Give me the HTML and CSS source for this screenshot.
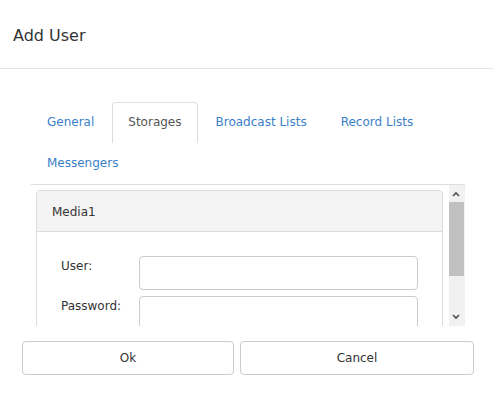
FILE: index.html
```html
<!DOCTYPE html>
<html lang="en">
<head>
<meta charset="utf-8">
<title>Add User</title>
<link rel="stylesheet" href="styles.css">
</head>
<body>
<div class="dialog">
  <div class="header"><h1 class="title">Add User</h1></div>
  <div class="body">
    <ul class="tabs">
      <li class="tab"><a class="tab-link">General</a></li>
      <li class="tab active"><a class="tab-link">Storages</a></li>
      <li class="tab"><a class="tab-link">Broadcast Lists</a></li>
      <li class="tab"><a class="tab-link">Record Lists</a></li>
      <li class="tab"><a class="tab-link">Messengers</a></li>
    </ul>
    <div class="pane">
      <div class="pane-content">
        <div class="panel">
          <div class="panel-heading">Media1</div>
          <div class="panel-body">
            <div class="form-row"><label class="form-label">User:</label><input class="form-input" type="text"></div>
            <div class="form-row"><label class="form-label">Password:</label><input class="form-input" type="password"></div>
          </div>
        </div>
      </div>
      <div class="scrollbar">
        <div class="sb-btn sb-up"><svg width="15" height="17" viewBox="0 0 15 17"><polyline points="4,11 7,8 10,11" fill="none" stroke="#505050" stroke-width="1.6"/></svg></div>
        <div class="sb-track"><div class="sb-thumb"></div></div>
        <div class="sb-btn sb-down"><svg width="15" height="17" viewBox="0 0 15 17"><polyline points="4,6 7,9 10,6" fill="none" stroke="#505050" stroke-width="1.6"/></svg></div>
      </div>
    </div>
  </div>
  <div class="footer">
    <button class="btn btn-ok" type="button">Ok</button>
    <button class="btn btn-cancel" type="button">Cancel</button>
  </div>
</div>
</body>
</html>
```

FILE: styles.css
```css
html, body {
  margin: 0;
  padding: 0;
  background: #ffffff;
}
body {
  font-family: "DejaVu Sans", Verdana, sans-serif;
  font-size: 12px;
  color: #333333;
}
.dialog {
  width: 493px;
}
.header {
  height: 68px;
  border-bottom: 1px solid #e5e5e5;
  padding: 0 13px;
}
.title {
  margin: 0;
  padding-top: 25px;
  font-size: 16px;
  line-height: 22px;
  font-weight: normal;
  color: #333333;
}
.body {
  margin: 33px 28px 0 31px;
}
.tabs {
  list-style: none;
  margin: 0;
  padding: 0;
  display: flex;
  flex-wrap: wrap;
  border-bottom: 1px solid #dddddd;
}
.tab {
  margin-right: 2px;
  height: 41px;
  box-sizing: border-box;
  border: 1px solid transparent;
  border-bottom: 0;
  border-radius: 4px 4px 0 0;
}
.tab.active {
  border-color: #dddddd;
}
.tab-link {
  display: block;
  padding: 10px 15px 9px;
  line-height: 19px;
  color: #3a7fc9;
  cursor: pointer;
}
.tab.active .tab-link {
  color: #555555;
}
.pane {
  display: flex;
  height: 141px;
}
.pane-content {
  flex: 1 1 auto;
  overflow: hidden;
  padding: 5px 6px 0 5px;
}
.panel {
  border: 1px solid #dddddd;
  border-radius: 4px;
}
.panel-heading {
  background: #f4f4f4;
  border-bottom: 1px solid #dddddd;
  border-radius: 3px 3px 0 0;
  padding: 11px 15px 9px;
  line-height: 20px;
  color: #333333;
}
.panel-body {
  padding: 24px 24px;
  display: flex;
  flex-direction: column;
  gap: 6px;
}
.form-row {
  display: flex;
  align-items: flex-start;
}
.form-label {
  flex: 0 0 78px;
  padding-top: 2px;
  line-height: 17px;
  color: #333333;
}
.form-input {
  flex: 1 1 auto;
  height: 34px;
  box-sizing: border-box;
  margin: 0;
  border: 1px solid #cccccc;
  border-radius: 4px;
  background: #ffffff;
  padding: 6px 10px;
  font: inherit;
}
.scrollbar {
  flex: 0 0 16px;
  display: flex;
  flex-direction: column;
  background: #f1f1f1;
}
.sb-btn {
  height: 17px;
  display: flex;
  justify-content: flex-start;
}
.sb-btn svg {
  display: block;
}
.sb-track {
  flex: 1 1 auto;
}
.sb-thumb {
  width: 15px;
  height: 74px;
  background: #c1c1c1;
}
.footer {
  display: flex;
  gap: 6px;
  margin: 15px 19px 0 22px;
}
.btn {
  height: 34px;
  margin: 0;
  border: 1px solid #cccccc;
  border-radius: 4px;
  background: #ffffff;
  color: #333333;
  font-family: inherit;
  font-size: 12px;
  padding: 0 12px;
}
.btn-ok {
  flex: 0 0 212px;
}
.btn-cancel {
  flex: 1 1 auto;
}
```
